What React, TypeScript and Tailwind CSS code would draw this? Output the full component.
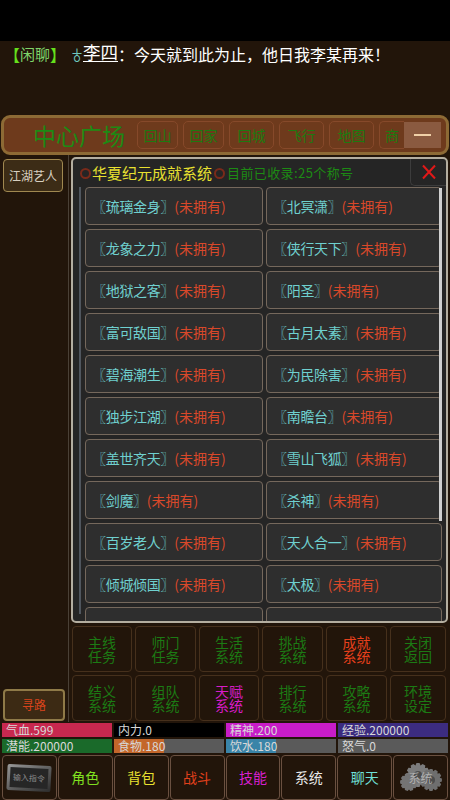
const font = "font-['Noto_Sans_CJK_SC','Liberation_Sans',sans-serif]";

const titles: [string, string][] = [
  ['琉璃金身', '北冥潇'],
  ['龙象之力', '侠行天下'],
  ['地狱之客', '阳圣'],
  ['富可敌国', '古月太素'],
  ['碧海潮生', '为民除害'],
  ['独步江湖', '南瞻台'],
  ['盖世齐天', '雪山飞狐'],
  ['剑魔', '杀神'],
  ['百岁老人', '天人合一'],
  ['倾城倾国', '太极'],
  ['', ''],
];

const menu: [string, string][] = [
  ['主线\n任务', 'text-[#1c7a14]'],
  ['师门\n任务', 'text-[#1c7a14]'],
  ['生活\n系统', 'text-[#1c7a14]'],
  ['挑战\n系统', 'text-[#1c7a14]'],
  ['成就\n系统', 'text-[#e8401c]'],
  ['关闭\n返回', 'text-[#1c7a14]'],
  ['结义\n系统', 'text-[#1c7a14]'],
  ['组队\n系统', 'text-[#1c7a14]'],
  ['天赋\n系统', 'text-[#d81cc8]'],
  ['排行\n系统', 'text-[#1c7a14]'],
  ['攻略\n系统', 'text-[#1c7a14]'],
  ['环境\n设定', 'text-[#1c7a14]'],
];

function TitleCell({ name }: { name: string }) {
  return (
    <div className="flex h-[38px] shrink-0 items-center rounded-[4px] border border-[#75685c] bg-[#2e2e2e] pl-[6px] text-[14px] whitespace-nowrap">
      {name && (
        <>
          <span className="tracking-[-0.3px] text-[#6fd0cf]">〖{name}〗</span>
          <span className="text-[#d8482a]">(未拥有)</span>
        </>
      )}
    </div>
  );
}

function Stat({ label, fill, width, dark }: { label: string; fill: string; width: string; dark?: boolean }) {
  return (
    <div className={`relative h-[14px] flex-1 ${dark ? 'bg-black' : 'bg-[#5a5a5a]'}`}>
      <div className={`absolute inset-y-0 left-0 ${fill} ${width}`} />
      <span className="relative block pl-[4px] text-[12px] leading-[14px] text-[#d8d8d8]">{label}</span>
    </div>
  );
}

function gearPath(cx: number, cy: number, r: number, teeth: number) {
  const points: string[] = [];
  const step = (Math.PI * 2) / teeth;
  for (let i = 0; i < teeth; i++) {
    const a = i * step;
    const outer = r;
    const inner = r * 0.82;
    const corners: [number, number][] = [
      [inner, a - step * 0.5],
      [outer, a - step * 0.25],
      [outer, a + step * 0.25],
      [inner, a + step * 0.5],
    ];
    corners.forEach(([rad, ang]) => {
      points.push(`${(cx + rad * Math.cos(ang)).toFixed(2)},${(cy + rad * Math.sin(ang)).toFixed(2)}`);
    });
  }
  return `M${points.join('L')}Z`;
}

export default function App() {
  return (
    <div className={`flex h-[800px] w-[450px] flex-col overflow-hidden bg-[#22150a] ${font}`}>
      <div className="h-[41px] shrink-0 bg-black" />

      <div className="flex h-[74px] shrink-0 items-start pl-[4px] text-[16px] leading-[26px] whitespace-nowrap text-white">
        <span className="w-[16px] text-[#66e01c]">【</span>
        <span className="w-[30px] text-[15px] text-[#7fd46a]">闲聊</span>
        <span className="w-[16px] text-[#66e01c]">】</span>
        <span className="ml-[4px] w-[13px] text-center text-[14px] text-[#6fc8c0]">♁</span>
        <span className="h-[20px] translate-y-[1px] border-b border-white text-[17.5px] leading-[20px]">李四</span>
        <span>：今天就到此为止，他日我李某再来！</span>
      </div>

      <div className="mx-[1px] flex h-[40px] shrink-0 items-center overflow-hidden rounded-[9px] border-[3px] border-[#8d6a35] bg-[#6e3a1c]">
        <span className="ml-[29px] w-[104px] text-[23px] leading-none whitespace-nowrap text-[#1d8a14]">中心广场</span>
        <div className="flex items-center gap-[5px]">
          {['回山', '回家', '回城', '飞行', '地图'].map((t, i) => (
            <div
              key={t}
              className={`flex h-[28px] items-center justify-center rounded-[5px] border border-[#86492a] text-[14px] text-[#1d7a10] ${i < 2 ? 'w-[41px]' : 'w-[45px]'}`}
            >
              {t}
            </div>
          ))}
        </div>
        <div className="ml-[5px] flex h-[28px] w-[25px] items-center justify-center rounded-l-[5px] border-y border-l border-[#86492a] text-[14px] text-[#1d7a10]">
          商
        </div>
        <div className="flex h-[26px] w-[37px] items-center justify-center bg-[#8a5a40]">
          <div className="h-[2px] w-[17px] bg-[#f0d0a8]" />
        </div>
      </div>

      <div className="flex min-h-0 flex-1">
        <div className="flex w-[69px] shrink-0 flex-col justify-between border-r border-[#4a4036] px-[3px] pt-[4px]">
          <div className="flex h-[33px] w-[60px] items-center justify-center rounded-[4px] border border-[#a08850] bg-[#3c2c16] text-[12px] text-[#d8d0c0]">
            江湖艺人
          </div>
          <div className="mb-[1px] flex h-[32px] w-[62px] items-center justify-center rounded-[4px] border-2 border-[#8f7a48] bg-[#3c2a14] text-[12px] text-[#d8441c]">
            寻路
          </div>
        </div>

        <div className="flex min-w-0 flex-1 flex-col">
          <div className="relative mx-[2px] mt-[2px] flex h-[466px] shrink-0 flex-col overflow-hidden rounded-[5px] border-2 border-[#b4aea0] bg-[#252525]">
            <div className="flex h-[28px] shrink-0 items-center pl-[7px] text-[15px] whitespace-nowrap">
              <span className="mr-[1px] h-[11px] w-[11px] rounded-full border-2 border-[#7a2a1a]" />
              <span className="text-[#e8e030]">华夏纪元成就系统</span>
              <span className="mx-[2px] h-[11px] w-[11px] rounded-full border-2 border-[#7a2a1a]" />
              <span className="text-[13px] text-[#1d8a14] tracking-[0.4px]">目前已收录:25个称号</span>
            </div>
            <div className="absolute top-0 right-0 flex h-[27px] w-[36px] items-center justify-center rounded-bl-[5px] border-b border-l border-[#3c3c3c]">
              <svg width="16" height="16" viewBox="0 0 16 16">
                <path d="M2 1.5 14 14.5M14 1.5 2 14.5" stroke="#e01818" strokeWidth="2" fill="none" />
              </svg>
            </div>

            <div className="flex min-h-0 flex-1 pl-[6px]">
              <div className="h-[427px] w-[2px] shrink-0 bg-[#50565e]" />
              <div className="ml-[4px] grid w-[357px] grid-cols-[178px_176px] content-start gap-x-[3px] gap-y-[4px]">
                {titles.flat().map((t, i) => (
                  <TitleCell key={i} name={t} />
                ))}
              </div>
            </div>
            <div className="absolute top-[29px] right-[4px] h-[333px] w-[3px] bg-[#d0d0d0]" />
          </div>

          <div className="ml-[3px] mt-[3px] grid w-[375px] grid-cols-[60px_61px_60px_61px_61px_56px] gap-x-[3px] gap-y-[3px]">
            {menu.map(([label, c]) => (
              <div
                key={label}
                className={`flex h-[46px] items-center justify-center rounded-[4px] border border-[#46301c] text-center text-[14px] leading-[14px] whitespace-pre-line ${c}`}
              >
                {label}
              </div>
            ))}
          </div>
        </div>
      </div>

      <div className="mt-[1px] flex shrink-0 flex-col gap-[2px] px-[2px]">
        <div className="flex gap-[2px]">
          <Stat label="气血.599" fill="bg-[#c8284f]" width="w-full" />
          <Stat label="内力.0" fill="bg-black" width="w-full" dark />
          <Stat label="精神.200" fill="bg-[#c81cc8]" width="w-full" />
          <Stat label="经验.200000" fill="bg-[#3c2c80]" width="w-full" />
        </div>
        <div className="flex gap-[2px]">
          <Stat label="潜能.200000" fill="bg-[#1a6a2a]" width="w-full" />
          <Stat label="食物.180" fill="bg-[#c4662a]" width="w-[45%]" />
          <Stat label="饮水.180" fill="bg-[#3a84a8]" width="w-[45%]" />
          <Stat label="怒气.0" fill="bg-transparent" width="w-0" />
        </div>
      </div>

      <div className="mt-[2px] grid h-[45px] shrink-0 grid-cols-8 gap-[1px] px-[2px]">
        <div className="flex items-center justify-center rounded-[4px] border border-[#6a5040]">
          <div className="flex h-[26px] w-[44px] rotate-[3deg] items-center justify-center rounded-[2px] bg-gradient-to-br from-[#9a9a9a] to-[#2c2c2c] p-[3px]">
            <div className="flex h-full w-full items-center justify-center bg-[#262626] text-[8px] text-[#8a8a8a]">
              输入指令
            </div>
          </div>
        </div>
        {[
          ['角色', 'text-[#80e020]'],
          ['背包', 'text-[#e8e030]'],
          ['战斗', 'text-[#e0401c]'],
          ['技能', 'text-[#d820d0]'],
          ['系统', 'text-[#e8e8e8]'],
          ['聊天', 'text-[#70e0d8]'],
        ].map(([t, c]) => (
          <div key={t} className={`flex items-center justify-center rounded-[4px] border border-[#6a5040] text-[14px] ${c}`}>
            {t}
          </div>
        ))}
        <div className="relative flex items-center justify-center rounded-[4px] border border-[#6a5040]">
          <svg width="48" height="32" viewBox="0 0 48 32" className="absolute">
            <path d={gearPath(21, 13, 12, 12)} fill="#7c7c7c" />
            <path d={gearPath(34, 18, 11, 12)} fill="#6e6e6e" />
            <path d={gearPath(12, 20, 9, 10)} fill="#747474" />
            <circle cx="21" cy="13" r="4" fill="#4c4c4c" />
            <circle cx="34" cy="18" r="4" fill="#4c4c4c" />
          </svg>
          <span className="relative text-[12px] text-[#b0b0b0]">系统</span>
        </div>
      </div>
    </div>
  );
}
